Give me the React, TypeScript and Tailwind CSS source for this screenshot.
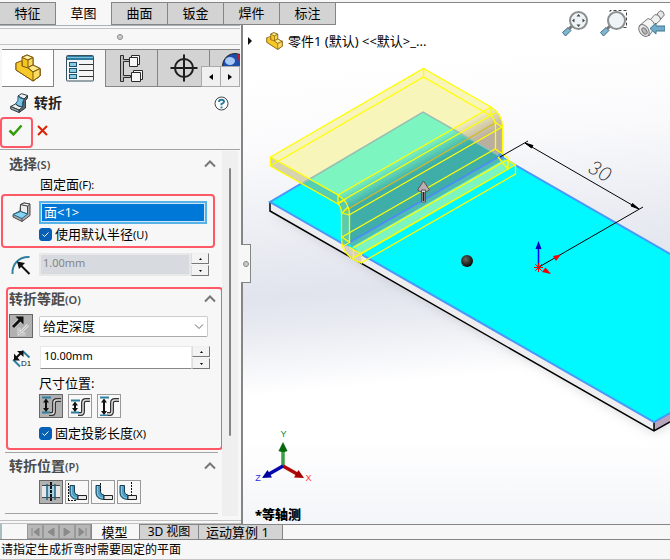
import React, { useState } from 'react';
import { clsx } from 'clsx';

const FONT = "font-['Noto_Sans','Noto_Sans_CJK_SC',sans-serif]";

const RIBBON_TABS = ['特征', '草图', '曲面', '钣金', '焊件', '标注'];

const PartIcon = ({ className }: { className: string }) => (
    <svg viewBox="0 0 26 28" className={className} aria-hidden="true">
        <g stroke="#7a5410" strokeWidth="1" strokeLinejoin="round">
            <path d="M1 9 L7 12 V3 L12 1 L18 3.5 V11 L25 14.5 V22 L18 27 L1 16 Z" fill="#f5c41f" />
            <path d="M1 9 L6 7 L7 7 V12 L13 14 L18 18 L25 14.5 V22 L18 27 L1 16 Z" fill="#f7c928" />
            <path d="M7 3.5 L12 1 L18 3.5 L13 6 Z" fill="#fff0a0" />
            <path d="M13 6 L18 3.5 V11 L13 13.5 Z" fill="#f9d955" />
            <path d="M13 13.5 L18 11 L25 14.5 L18 18 Z" fill="#ffe982" />
            <path d="M18 18 L25 14.5 V22 L18 27 Z" fill="#fbdc62" />
        </g>
    </svg>
);

const PropertyIcon = () => (
    <svg viewBox="0 0 28 27" className="h-[27px] w-7" aria-hidden="true">
        <rect x="0.5" y="0.5" width="27" height="25.5" rx="1" fill="#f4f4f4" stroke="#35505f" />
        <rect x="1" y="1" width="26" height="4" fill="#2d7da3" />
        <path d="M1 2.500H27" stroke="#7cc0dc" />
        {[7, 13, 19].map((y) => (
            <g key={y}>
                <rect x="3.500" y={y + 0.5} width="7" height="4" fill="#8bcbe2" stroke="#1c5573" />
                <path d={`M13 ${y + 2.5}H27`} stroke="#333" />
            </g>
        ))}
    </svg>
);

const ConfigIcon = () => (
    <svg viewBox="0 0 25 29" className="h-[29px] w-[25px]" aria-hidden="true">
        <g fill="#f7f7f7" stroke="#2b2b2b">
            <path d="M1.500 1.500h3v4h6v2h-6v14h7v2h-7v4h-3z" fill="#bbb" />
            <path d="M12.500 3.500 V1.500 H20.500 V10.500 H18.500" />
            <path d="M10.500 3.500h8v9h-8z" />
            <path d="M14.500 19 V16.500 H23.500 V25.500 H21.500" />
            <path d="M12.500 18.500h9v9h-9z" />
        </g>
    </svg>
);

const TargetIcon = () => (
    <svg viewBox="0 0 28 28" className="h-7 w-7" aria-hidden="true">
        <circle cx="14" cy="14" r="9" fill="none" stroke="#1d1d1d" strokeWidth="2" />
        <path d="M14 0.500V27.500M0.500 14H27.500" stroke="#1d1d1d" strokeWidth="2" />
    </svg>
);

const JogIcon = () => (
    <svg viewBox="0 0 18 20" className="h-5 w-[18px]" aria-hidden="true">
        <g strokeLinejoin="round" stroke="#2f3b42">
            <path d="M14 6 L17.500 2.500 V5 L15.500 7.500 V15 L9 19.500 V16.500 L12.500 14 Z" fill="#5d676d" />
            <path d="M8 3 L11.500 0.700 L17.500 2.500 L14 6 Z" fill="#f2f2f2" />
            <path d="M8 3 Q10 6 14 6 Q11.500 10 12.500 14 Q9 14 5.500 11 Q9 8 8 3 Z" fill="#7dc0df" stroke="#1c5b7c" />
            <path d="M5.500 11 Q8 14 12.500 14 L9 17 L0.700 13.500 Z" fill="#eee" />
            <path d="M0.700 13.500 L9 17 V19.500 L0.700 16 Z" fill="#9ea7ac" />
        </g>
    </svg>
);

const FaceIcon = () => (
    <svg viewBox="0 0 20 21" className="h-[21px] w-5" aria-hidden="true">
        <g strokeLinejoin="round" stroke="#4a4a4a">
            <path d="M8.500 2.500 L12 1 L18 2 V13.500 L10 19.500 L1 15 V12.500 L8 9 Z" fill="#a8a8a8" />
            <path d="M8.500 2.500 L15.500 4 V12 L8.500 9.500 Z" fill="#ededed" />
            <path d="M8.500 2.500 L12 1 L18 2 L15.500 4 Z" fill="#f8f8f8" />
            <path d="M1 12.500 L8.500 9.500 L15.500 12 L10 16.500 Z" fill="#86d4f0" stroke="#20678a" />
            <path d="M10 16.500 V19.500" />
        </g>
    </svg>
);

const RadiusIcon = () => (
    <svg viewBox="0 0 20 20" className="h-5 w-5" aria-hidden="true">
        <path d="M1.500 19 C1 10 7 1.500 18.500 2" fill="none" stroke="#2f7f9e" strokeWidth="2" />
        <path d="M18.500 19 L9 9.500" stroke="#111" strokeWidth="2" />
        <path d="M6 6.500 L14 8 L8 14 Z" fill="#111" />
    </svg>
);

const ReverseIcon = () => (
    <svg viewBox="0 0 20 20" className="h-5 w-5" aria-hidden="true">
        <path d="M17 9 L10 16 M8 11.500 V18 H14.500" stroke="#e0e0e0" strokeWidth="3" fill="none" />
        <path d="M17 9 L10 16 M8 11.500 V18 H14.500" stroke="#b0b0b0" strokeWidth="1" fill="none" />
        <path d="M2 11 L9 4" stroke="#e4e4e4" strokeWidth="4" />
        <path d="M2 11 L9 4" stroke="#111" strokeWidth="3" />
        <path d="M4.500 0.500 H12.500 V8.500 Z" fill="#111" />
    </svg>
);

const DepthIcon = () => (
    <svg viewBox="0 0 20 19" className="h-[19px] w-5" aria-hidden="true">
        <path d="M1 10.500 L8 17.500 M10 1.500 L17.500 8.500" stroke="#2c7f9e" strokeWidth="2" />
        <path d="M3 10 L10 3" stroke="#111" strokeWidth="2" />
        <path d="M2 4.500 V11.500 H8 Z M5 2 H11.500 V8 Z" fill="#111" />
        <text x="9" y="17" fontSize="8" fontFamily="Liberation Sans, sans-serif" fill="#111">D1</text>
    </svg>
);

/* Dimension position: where the vertical arrow starts and ends relative to the bend */
const DimensionIcon = ({ kind }: { kind: 'outside' | 'inside' | 'overall' }) => {
    const top = kind === 'inside' ? 6 : 3;
    const bottom = kind === 'overall' ? 19 : 16;
    return (
        <svg viewBox="0 0 20 20" className="h-5 w-5" aria-hidden="true">
            <path d="M8 18 H11 Q13 18 13 15 V7 Q13 4 16 4 H20" fill="none" stroke="#333" strokeWidth="4" />
            <path d="M8 18 H11 Q13 18 13 15 V7 Q13 4 16 4 H20" fill="none" stroke="#ddd" strokeWidth="1.500" />
            <path d={`M1 ${top - 1.5}H10M1 ${bottom + 0.5}H9`} stroke="#2c7f9e" strokeWidth="2" />
            <path d={`M5 ${top + 2}V${bottom - 2}`} stroke="#111" strokeWidth="2" />
            <path d={`M5 ${top - 0.5}l3 4h-6zM5 ${bottom}l3 -4h-6z`} fill="#111" />
        </svg>
    );
};

const BendPositionIcon = ({ kind }: { kind: 'center' | 'inside' | 'material' | 'outside' }) => {
    if (kind === 'center') {
        return (
            <svg viewBox="0 0 20 20" className="h-5 w-5" aria-hidden="true">
                <path d="M1 3H19V16H1z" fill="#e8e8e8" />
                <rect x="6" y="3" width="8" height="13" fill="#a9d2e4" />
                <path d="M1 3.500H19M1 15.500H19" stroke="#444" />
                <path d="M6 2V18M14 2V18" stroke="#1f6282" strokeWidth="1.500" />
                <path d="M10 0V20" stroke="#111" strokeWidth="2" strokeDasharray="3 1" />
            </svg>
        );
    }
    const bend = kind === 'outside' ? 0 : 2;
    const dash = { inside: 'M1.500 1V19', material: 'M7.500 1V10', outside: 'M12.500 0V13' }[kind];
    return (
        <svg viewBox="0 0 20 20" className="h-5 w-5" aria-hidden="true">
            <g transform={`translate(${bend} 0)`}>
                <path d="M1 3.500 H5.500 V10 Q6 13 9 13 V17.500 Q1 17 1 11 Z" fill="#4c9fc3" stroke="#173f54" />
                <path d="M2.500 4V11Q3 15.500 8 16" fill="none" stroke="#8ccbe5" />
                <path d="M9 13.500H17.500V17.500H9z" fill="#e9e9e9" stroke="#222" />
            </g>
            <path d={dash} stroke="#111" strokeDasharray="2 1" />
            {kind === 'inside' && <path d="M1 18.500H10" stroke="#111" strokeDasharray="2 1" />}
        </svg>
    );
};

const Highlight = ({ className, children }: { className?: string; children: React.ReactNode }) => (
    <div className={clsx('rounded border-2 border-[#ff5967]', className)}>{children}</div>
);

const GroupHeader = ({ title, hotkey }: { title: string; hotkey: string }) => (
    <button type="button" className="flex h-5 w-full items-center justify-between text-left text-[#4b4b4b]">
        <span className="text-sm leading-5 font-bold">
            {title}
            <span className="text-[11px] font-semibold">({hotkey})</span>
        </span>
        <svg viewBox="0 0 12 8" className="h-2 w-3" aria-hidden="true">
            <path d="M1 6.500 L6 1.500 L11 6.500" fill="none" stroke="#777" strokeWidth="2" />
        </svg>
    </button>
);

const CheckRow = ({ label, hotkey }: { label: string; hotkey: string }) => {
    const [checked, setChecked] = useState(true);
    return (
        <label className="flex h-5 items-center gap-[3px] text-[13px] leading-5">
            <span className="relative h-[13px] w-[13px]">
                <input
                    type="checkbox"
                    checked={checked}
                    onChange={() => setChecked(!checked)}
                    className="block h-[13px] w-[13px] appearance-none rounded-[3px] border border-[#005fb8] checked:bg-[#0560b6]"
                />
                {checked && (
                    <svg viewBox="0 0 13 13" className="pointer-events-none absolute inset-0" aria-hidden="true">
                        <path d="M3.500 6.500 L5.500 8.500 L9.500 4.500" fill="none" stroke="#fff" />
                    </svg>
                )}
            </span>
            <span>
                {label}
                <span className="text-[11px]">({hotkey})</span>
            </span>
        </label>
    );
};

const Spinner = ({ label, value, disabled }: { label: string; value: string; disabled?: boolean }) => (
    <div className="flex h-6 w-[170px]">
        <input
            aria-label={label}
            defaultValue={value}
            disabled={disabled}
            className={clsx(
                'h-[23px] min-w-0 flex-1 border border-[#e8e8e8] pb-1 text-[11px]',
                disabled ? 'border-2 bg-[#d7dadf] px-0.5 text-[#858585]' : 'border-b-[#888] bg-white px-[3px] text-black',
            )}
        />
        <div className="flex w-[18px] flex-col gap-px">
            {['M0 3 L1.500 1 L3 3 Z', 'M0 1 L1.500 3 L3 1 Z'].map((d, i) => (
                <button
                    key={d}
                    type="button"
                    aria-label={i === 0 ? `${label} +` : `${label} -`}
                    className="flex h-[11px] items-center justify-center border border-t-[#eee] border-r-[#777] border-b-[#777] border-l-[#ddd] bg-[#f3f3f3]"
                >
                    <svg viewBox="0 0 3 4" className="h-1 w-[3px]"><path d={d} fill="#000" /></svg>
                </button>
            ))}
        </div>
    </div>
);

const ToolToggle = ({ label, active, onClick, children }: {
    label: string;
    active: boolean;
    onClick?: () => void;
    children: React.ReactNode;
}) => (
    <button
        type="button"
        aria-label={label}
        aria-pressed={active}
        onClick={onClick}
        className={clsx(
            'flex h-6 w-6 shrink-0 items-center justify-center border',
            active ? 'border-[#666] bg-[#b1b1b1]' : 'border-[#999] bg-[#f8f8f8]',
        )}
    >
        {children}
    </button>
);

const PropertyPanel = () => {
    const [dimension, setDimension] = useState('outside');
    const [position, setPosition] = useState('center');

    return (
        <aside className="flex w-[243px] shrink-0 flex-col border-r-2 border-[#858585] bg-[#f7f7f7]">
            <div className="mr-px h-[3px] border-t border-[#a3b3b8]" />
            <div className="mr-px flex h-[17px] items-center justify-center border-t border-b border-[#c4c4c4]">
                <span className="h-1.5 w-1.5 rounded-full border border-[#888] bg-[#ccc]" />
            </div>

            <div className="relative mt-1 mr-px ml-0.5 flex h-[38px] overflow-hidden border-t border-[#858585]">
                <button type="button" aria-label="FeatureManager" className="flex w-[52px] shrink-0 items-center justify-center border-r border-b border-[#858585] bg-white">
                    <PartIcon className="h-7 w-[26px]" />
                </button>
                <button type="button" aria-label="PropertyManager" className="flex w-[52px] shrink-0 items-center justify-center border-r border-[#858585]">
                    <PropertyIcon />
                </button>
                <button type="button" aria-label="ConfigurationManager" className="flex w-[52px] shrink-0 items-center justify-center border-r border-b border-[#858585] bg-[#d3d3d3]">
                    <ConfigIcon />
                </button>
                <button type="button" aria-label="DimXpertManager" className="flex w-[52px] shrink-0 items-center justify-center border-r border-b border-[#858585] bg-[#d3d3d3]">
                    <TargetIcon />
                </button>
                <button type="button" aria-label="DisplayManager" className="flex w-[52px] shrink-0 justify-start border-b border-[#858585] bg-[#d3d3d3] pt-[3px] pl-3">
                    <svg viewBox="0 0 26 26" className="h-[26px] w-[26px]" aria-hidden="true">
                        <circle cx="13" cy="13" r="12.500" fill="#1d4fae" stroke="#222" />
                        <path d="M15 1 A12.500 12.500 0 0 1 25 13 H18 Z" fill="#c31925" />
                        <ellipse cx="8" cy="8" rx="5" ry="4" fill="#a9c8f5" />
                    </svg>
                </button>
                <div className="absolute right-0 bottom-0 flex border-t border-l border-[#aaa] bg-[#eee]">
                    {['M4 0 V6 L0 3 Z', 'M0 0 V6 L4 3 Z'].map((d, i) => (
                        <button
                            key={d}
                            type="button"
                            aria-label={i === 0 ? '上一页' : '下一页'}
                            className="flex h-5 w-[19px] items-center justify-center border-r border-b border-[#aaa] bg-[#f0f0f0]"
                        >
                            <svg viewBox="0 0 4 6" className="h-1.5 w-1"><path d={d} fill="#000" /></svg>
                        </button>
                    ))}
                </div>
            </div>

            <div className="flex h-[30px] items-center pt-0.5 pr-3 pl-2.5">
                <JogIcon />
                <h1 className="flex-1 pl-1.5 text-sm leading-5 font-bold text-[#222]">转折</h1>
                <button type="button" aria-label="帮助">
                    <svg viewBox="0 0 15 15" className="h-[15px] w-[15px]">
                        <circle cx="7.500" cy="7.500" r="6.500" fill="#fff" stroke="#444" />
                        <path d="M5 6 Q5 3.800 7.500 3.800 Q10 3.800 10 5.800 Q10 7.200 7.500 8 V9.200" fill="none" stroke="#2b7d9e" strokeWidth="2" />
                        <path d="M6.500 10.500h2v1.800h-2z" fill="#2b7d9e" />
                    </svg>
                </button>
            </div>

            <div className="mr-px flex h-[33px] items-start gap-1 border-b border-[#a3a3a3]">
                <Highlight className="flex h-[31px] w-[33px] items-center justify-center">
                    <button type="button" aria-label="确定" className="pr-0.5 pb-1">
                        <svg viewBox="0 0 15 13" className="h-[13px] w-[15px]">
                            <path d="M1.500 6.500 L5.500 10.500 L13.500 1.500" fill="none" stroke="#339b08" strokeWidth="2.500" />
                        </svg>
                    </button>
                </Highlight>
                <button type="button" aria-label="取消" className="mt-2">
                    <svg viewBox="0 0 11 11" className="h-[11px] w-[11px]">
                        <path d="M1 1 L10 10 M10 1 L1 10" stroke="#dc2104" strokeWidth="2" />
                    </svg>
                </button>
            </div>

            <div className="mr-[3px] flex flex-1">
                <div className="flex min-w-0 flex-1 flex-col">
                    <section>
                        <div className="pt-1 pr-1.5 pl-[9px]">
                            <GroupHeader title="选择" hotkey="S" />
                        </div>
                        <p className="h-5 pl-10 text-[13px] leading-5">
                            固定面<span className="text-[11px]">(F):</span>
                        </p>
                        <Highlight className="mr-[7px] ml-px pr-1.5 pb-0.5 pl-[9px]">
                            <div className="flex items-center gap-[7px] pt-[5px]">
                                <FaceIcon />
                                <input
                                    aria-label="固定面"
                                    readOnly
                                    value="面<1>"
                                    className="h-[23px] min-w-0 flex-1 border-2 border-[#55b3e8] bg-[#0078d7] px-[3px] pb-0.5 text-[13px] text-white outline outline-1 -outline-offset-3 outline-[#cfe4f5]"
                                />
                            </div>
                            <div className="pl-[27px]">
                                <CheckRow label="使用默认半径" hotkey="U" />
                            </div>
                        </Highlight>
                        <div className="flex items-center gap-2 pt-[5px] pb-2.5 pl-[11px]">
                            <RadiusIcon />
                            <Spinner label="折弯半径" value="1.00mm" disabled />
                        </div>
                    </section>

                    <Highlight className="-mr-px ml-1.5">
                        <section>
                            <div className="pr-[5px] pl-px">
                                <GroupHeader title="转折等距" hotkey="O" />
                            </div>
                            <div className="flex items-start gap-1.5 pt-[5px] pl-px">
                                <ToolToggle label="反向" active><ReverseIcon /></ToolToggle>
                                <div className="relative mt-0.5 w-[169px]">
                                    <select
                                        aria-label="终止条件"
                                        className="h-[21px] w-full appearance-none rounded-xs border border-[#ccc] border-b-[#aaa] bg-white pb-0.5 pl-[3px] text-[13px] leading-[18px]"
                                    >
                                        <option>给定深度</option>
                                    </select>
                                    <svg viewBox="0 0 10 6" className="pointer-events-none absolute top-2 right-1 h-1.5 w-2.5" aria-hidden="true">
                                        <path d="M1 0.500 L5 4.500 L9 0.500" fill="none" stroke="#666" />
                                    </svg>
                                </div>
                            </div>
                            <div className="flex items-center gap-2 pt-2 pl-1">
                                <DepthIcon />
                                <Spinner label="深度" value="10.00mm" />
                            </div>
                            <p className="mt-[3px] h-5 pl-[31px] text-[13px] leading-5">尺寸位置:</p>
                            <div className="mt-px flex gap-[5px] pl-[31px]">
                                {(['outside', 'inside', 'overall'] as const).map((kind) => (
                                    <ToolToggle key={kind} label={`尺寸位置 ${kind}`} active={dimension === kind} onClick={() => setDimension(kind)}>
                                        <DimensionIcon kind={kind} />
                                    </ToolToggle>
                                ))}
                            </div>
                            <div className="mt-[5px] pb-[5px] pl-[31px]">
                                <CheckRow label="固定投影长度" hotkey="X" />
                            </div>
                        </section>
                    </Highlight>

                    <section className="mt-0.5 mr-1 ml-[5px] border-t border-b border-[#a3a3a3] pb-[9px]">
                        <div className="pt-[3px] pr-0.5 pl-1">
                            <GroupHeader title="转折位置" hotkey="P" />
                        </div>
                        <div className="flex gap-0.5 pt-1 pl-[34px]">
                            {(['center', 'inside', 'material', 'outside'] as const).map((kind) => (
                                <ToolToggle key={kind} label={`转折位置 ${kind}`} active={position === kind} onClick={() => setPosition(kind)}>
                                    <BendPositionIcon kind={kind} />
                                </ToolToggle>
                            ))}
                        </div>
                    </section>
                </div>
                <div className="mt-px flex w-4 justify-center bg-[#efefef] pt-[17px] pb-20">
                    <span className="w-0.5 rounded-full bg-[#858585]" />
                </div>
            </div>
            <div className="mt-1 h-1 border-t border-b border-[#c0c0c0]" />
        </aside>
    );
};

const Model = () => (
    <svg
        viewBox="243 25 427 499"
        preserveAspectRatio="xMinYMin slice"
        className="absolute inset-0 h-full w-full"
        role="img"
        aria-label="钣金零件"
    >
        <defs>
            <linearGradient id="sky" gradientUnits="userSpaceOnUse" x1="400" y1="60" x2="430" y2="380">
                <stop offset="0" stopColor="#ffffff" />
                <stop offset="0.250" stopColor="#fafafc" />
                <stop offset="0.700" stopColor="#e1e4ed" />
                <stop offset="0.800" stopColor="#e9ebf2" />
                <stop offset="1" stopColor="#ffffff" />
            </linearGradient>
            <linearGradient id="bend" gradientUnits="userSpaceOnUse" x1="408" y1="154" x2="418" y2="172">
                <stop offset="0" stopColor="#7df5c1" />
                <stop offset="1" stopColor="#3eada7" />
            </linearGradient>
            <linearGradient id="bend-outer" gradientUnits="userSpaceOnUse" x1="486" y1="108" x2="498" y2="130">
                <stop offset="0" stopColor="#f8f5bb" />
                <stop offset="1" stopColor="#baae9d" />
            </linearGradient>
            <linearGradient id="floor" x1="0" y1="0" x2="0" y2="1">
                <stop offset="0" stopColor="#fff" />
                <stop offset="1" stopColor="#f4f5f8" />
            </linearGradient>
            <clipPath id="plate">
                <path d="M270 202 L423 112 L670 254 V413 L654 422 Z" />
            </clipPath>
            <filter id="shadow" x="-10%" y="-10%" width="120%" height="120%">
                <feGaussianBlur stdDeviation="6" />
            </filter>
            <radialGradient id="ball" cx="0.4" cy="0.35" r="0.7">
                <stop offset="0" stopColor="#66665c" />
                <stop offset="1" stopColor="#000" />
            </radialGradient>
        </defs>
        <rect x="243" y="25" width="427" height="499" fill="url(#sky)" />
        <rect x="243" y="440" width="427" height="84" fill="url(#floor)" />

        {/* base plate */}
        <path d="M272 212 L654 432 L670 425 V350 L400 200 Z" fill="#9a9aa0" opacity="0.4" filter="url(#shadow)" />
        <path d="M270 202 L654 422 V431 L270 211 Z" fill="#eeedf0" />
        <path d="M654 422 L670 413 V422 L654 431 Z" fill="#b7a3bb" />
        <path d="M270 202 L423 112 L670 254 V413 L654 422 Z" fill="#00f8ff" />
        <path d="M270 202 V211 L654 431 L670 422 M654 422 V431" fill="none" stroke="#000" strokeWidth="1.500" />
        <path d="M670 413 L654 422 L270 202 L423 112 L671 254.500" fill="none" stroke="#4a98f8" strokeWidth="2" />

        {/* jog preview over the background */}
        <path d="M270 157 L423 68 L491 107 L338 195 Z" fill="#f8f5bb" />
        <path d="M270 157 L338 195 V204 L270 166 Z" fill="#d8d4b0" />
        <path d="M491 107 Q502 114 503 127 L349 215 L338 195 Z" fill="url(#bend-outer)" />
        <path d="M503 127 V156 L349 242 V215 Z" fill="#baae9f" />

        {/* the same faces seen against the plate */}
        <g clipPath="url(#plate)">
            <path d="M270 157 L423 68 L491 107 L338 195 Z" fill="#7df5c1" />
            <path d="M270 157 L338 195 V204 L270 166 Z" fill="#54cfb3" />
            <path d="M338 195 L491 107 Q502 114 503 127 L349 215 Q349 203 338 195 Z" fill="url(#bend)" />
            <path d="M349 215 L503 127 V156 L349 243 Z" fill="#40aea8" />
            <path d="M349 243 L502 155 L515 164 L361 254 Z" fill="#7df5c1" />
            <path d="M349 243 L502 155 L505 159 L352 247 Z" fill="#4fbcb4" />
        </g>
        <path d="M338 195 Q349 203 349 215 V243 H342 V215 Q342 207 338 204 Z" fill="#5acbb0" />
        <path d="M343 243 L353 249 L361 254 V263 Q345 257 343 243 Z" fill="#d5d0c6" />
        <path d="M303 183 L423 112 L500 156" fill="none" stroke="#98bfb2" strokeWidth="1.500" />
        <path d="M345 245 L501 155.500" fill="none" stroke="#4a8df5" strokeWidth="2" />
        <circle cx="501" cy="156" r="3" fill="#4a98f8" />

        <g fill="none" stroke="#ffff00" strokeWidth="1.300">
            <path d="M270.500 157 L423.500 68.500 L491 107 Q502.500 114 502.500 127 V153" />
            <path d="M270 166 L423.500 77 L491 116 M423.500 68 V77 M491 107 V116" />
            <path d="M270.500 157 V166 L338 204 V195 Z" />
            <path d="M338 195 L491 107 M338 203 L495 113" />
            <path d="M349 215 L502 127 M342 237 L495 149" />
            <path d="M343 212 L495 123" stroke="#d3b928" />
            <path d="M338 195 Q349.500 202 349.500 215 V242 L341.500 237 V213 Q341 206 338 204" />
            <path d="M338 204 L346 199 M342 213 L348 207 M342 213 L349 215" />
            <path d="M491 116 Q495.500 119 495.500 126 V149 L508 158 V169 M495 122 L502 127" />
            <path d="M341.500 237 Q341 256 361.500 263 V254 L349 247 M353.500 249 V258 L361 254 M350 242 L342 247" />
            <path d="M353 248 L507 160 L515.500 165 V174 L361 263" />
            <path d="M361 254 L515 165 M353 258 L508 169 L515 165 M498 157 L508 169" />
        </g>

        {/* offset direction handle */}
        <g stroke="#555" strokeWidth="1">
            <path d="M423.500 181 L429.500 190 L426 192 H421 L417.500 190 Z" fill="#b9aeb2" />
            <path d="M421.500 190 H425.500 V202 H421.500 Z" fill="#ddd" />
            <path d="M423.500 192 V201" stroke="#222" strokeWidth="2" />
        </g>
        <circle cx="467" cy="261" r="6" fill="url(#ball)" />

        {/* dimension */}
        <g stroke="#000" strokeWidth="1" fill="#000">
            <path d="M500 157 L528 141 M525 143 L639 209 M539 267 L643 207" fill="none" />
            <path d="M525 143 L533 145.500 L531.500 148 Z M639 209 L632.500 203.500 L631 206 Z" />
        </g>
        <text
            x="600"
            y="178"
            textAnchor="middle"
            transform="rotate(30 600 171)"
            fontFamily="Lato, sans-serif"
            fontWeight="300"
            fontStyle="italic"
            fontSize="20"
            fill="#333"
        >
            30
        </text>

        {/* sketch origin */}
        <path d="M538.500 267 V248" stroke="#0000ff" strokeWidth="1.500" />
        <path d="M538.500 241 L541.500 249 H535.500 Z" fill="#0000c8" />
        <path d="M561 254.500 L553 256 L556 261 Z M551 274 L542 272 L545.500 267.500 Z" fill="#f00000" />
        <path d="M535 264 L542 271 M542 264 L535 271 M538.500 263 V272 M534 267.500 H543" stroke="#f00000" />

        {/* view triad */}
        <g strokeWidth="3.500">
            <path d="M283 466 V449" stroke="#39a045" />
            <path d="M283 466 L298 474.500" stroke="#b00808" />
            <path d="M283 466 L269 474" stroke="#0808b0" />
        </g>
        <path d="M283 442 L287.500 451 Q283 453 278.500 451 Z" fill="#08680d" />
        <path d="M304 478 L294 477.500 L298.500 470 Z" fill="#a80000" />
        <path d="M262 478 L267.500 470 L272 477.500 Z" fill="#0000a0" />
        <g fontFamily="Liberation Sans, sans-serif" fontSize="9" textAnchor="middle">
            <text x="283.500" y="437" fill="#0b8a1a">Y</text>
            <text x="308.500" y="481" fill="#ff3030">X</text>
            <text x="258" y="481" fill="#3030e0">Z</text>
        </g>
    </svg>
);

const Magnifier = ({ children }: { children?: React.ReactNode }) => (
    <svg viewBox="0 0 28 28" className="h-7 w-7" aria-hidden="true">
        <path d="M1.500 22.500 L7 17.500 L10 20.500 L4.500 26 Z" fill="#7fb6cf" stroke="#446f84" />
        <path d="M8 19 L11 16" stroke="#777" strokeWidth="3" />
        <circle cx="17.500" cy="10.500" r="8.500" fill="#eef4f5" stroke="#8b8f92" strokeWidth="2" />
        {children}
    </svg>
);

const Viewport = () => (
    <main className="relative min-w-0 flex-1">
        <Model />
        <div className="absolute top-[219px] -left-0.5 flex h-[39px] w-2.5 items-center justify-center border border-l-0 border-[#858585] bg-[#f7f7f7]">
            <span className="h-1.5 w-1.5 rounded-full border border-[#888] bg-[#ccc]" />
        </div>

        <div className="absolute top-1.5 left-[5px] flex items-center text-[13px] leading-5">
            <svg viewBox="0 0 4 8" className="h-2 w-1" aria-hidden="true"><path d="M0 0 L4 4 L0 8 Z" fill="#111" /></svg>
            <PartIcon className="ml-3.5 h-[18px] w-[17px]" />
            <span className="pl-[5px] whitespace-nowrap">零件1 (默认) &lt;&lt;默认&gt;_...</span>
        </div>

        <div className="absolute -top-[15px] right-[5px] flex gap-[10px]">
            <button type="button" aria-label="整屏显示全图">
                <Magnifier>
                    <path d="M17.500 4 l2 2.500h-4z M17.500 17 l2 -2.500h-4z M11 10.500 l2.500 -2v4z M24 10.500 l-2.500 -2v4z" fill="#444" />
                </Magnifier>
            </button>
            <button type="button" aria-label="局部放大">
                <Magnifier>
                    <path d="M11 2 V0.500 H27.500 V17.500 H24" fill="none" stroke="#444" strokeDasharray="3 2" />
                </Magnifier>
            </button>
            <button type="button" aria-label="上一视图">
                <svg viewBox="0 0 28 28" className="h-7 w-7" aria-hidden="true">
                    <g stroke="#777" strokeLinejoin="round">
                        <path d="M20 4 L23 0.700 Q27 1 27.300 5 L24 9 Z" fill="#e5e5e5" />
                        <path d="M13 10 L18 4.500 Q23 5 23.500 10 L18 15 Z" fill="#f0f0f0" />
                        <path d="M2 16 L11 8.500 Q17 10 18 17 L12 26 Z" fill="#f5f5f5" />
                        <ellipse cx="7" cy="20.500" rx="4.500" ry="6.500" transform="rotate(-35 7 20.500)" fill="#e8e8e8" />
                        <ellipse cx="7.500" cy="21" rx="2" ry="3.500" transform="rotate(-35 7.500 21)" fill="#bbb" />
                    </g>
                    <path d="M13 18.500 L19 13 V16 H28 V21 H19 V24 Z" fill="#70abc9" stroke="#3d7793" />
                </svg>
            </button>
        </div>

        <p className="absolute bottom-0 left-3 text-[13px] leading-5 font-black">*等轴测</p>
    </main>
);

export default function App() {
    const [ribbon, setRibbon] = useState('草图');

    return (
        <div className={clsx('flex min-h-screen flex-col overflow-hidden bg-[#f7f7f7] text-[13px] text-black', FONT)}>
            <nav className="flex h-[25px] shrink-0 pt-0.5">
                {RIBBON_TABS.map((tab) => (
                    <button
                        key={tab}
                        type="button"
                        onClick={() => setRibbon(tab)}
                        className={clsx(
                            'w-14 border-r border-[#858585] pb-0.5 text-[13px] leading-5',
                            tab === ribbon ? 'bg-[#f7f7f7]' : 'border-t border-b bg-[#d3d3d3]',
                        )}
                    >
                        {tab}
                    </button>
                ))}
                <div className="flex-1 border-t border-[#858585] bg-white" />
            </nav>

            <div className="flex flex-1">
                <PropertyPanel />
                <Viewport />
            </div>

            <nav className="flex h-4 shrink-0 border-b border-[#858585]">
                <div className="mr-[25px] w-0.5 bg-[#a9bcc2]" />
                <div className="flex border-r border-[#858585] bg-[#aaa]">
                    {['M3 1V9M10 1L5 5L10 9Z', 'M9 1L3 5L9 9Z', 'M3 1L9 5L3 9Z', 'M2 1L7 5L2 9ZM9 1V9'].map((d, i) => (
                        <button key={d} type="button" aria-label={['首页', '上一个', '下一个', '末页'][i]} className="flex w-4 items-center justify-center border border-[#999] bg-[#b7b7b7]">
                            <svg viewBox="0 0 12 10" className="h-2.5 w-3"><path d={d} fill="#8a8a8a" stroke="#8a8a8a" /></svg>
                        </button>
                    ))}
                </div>
                <button type="button" className="w-12 border-r border-[#858585] pr-0.5 text-[13px] leading-3">模型</button>
                <button type="button" className="w-[59px] border-t border-r border-[#858585] bg-[#d3d3d3] text-xs leading-3">3D 视图</button>
                <button type="button" className="w-[84px] border-t border-r border-[#858585] bg-[#d3d3d3] pr-1.5 text-[13px] leading-3">运动算例 1</button>
                <div className="flex-1 border-t border-[#858585]" />
            </nav>

            <footer className="flex h-5 shrink-0 items-center border-b border-[#c4c4c4] px-px text-xs leading-[18px]">
                请指定生成折弯时需要固定的平面
            </footer>
        </div>
    );
}
